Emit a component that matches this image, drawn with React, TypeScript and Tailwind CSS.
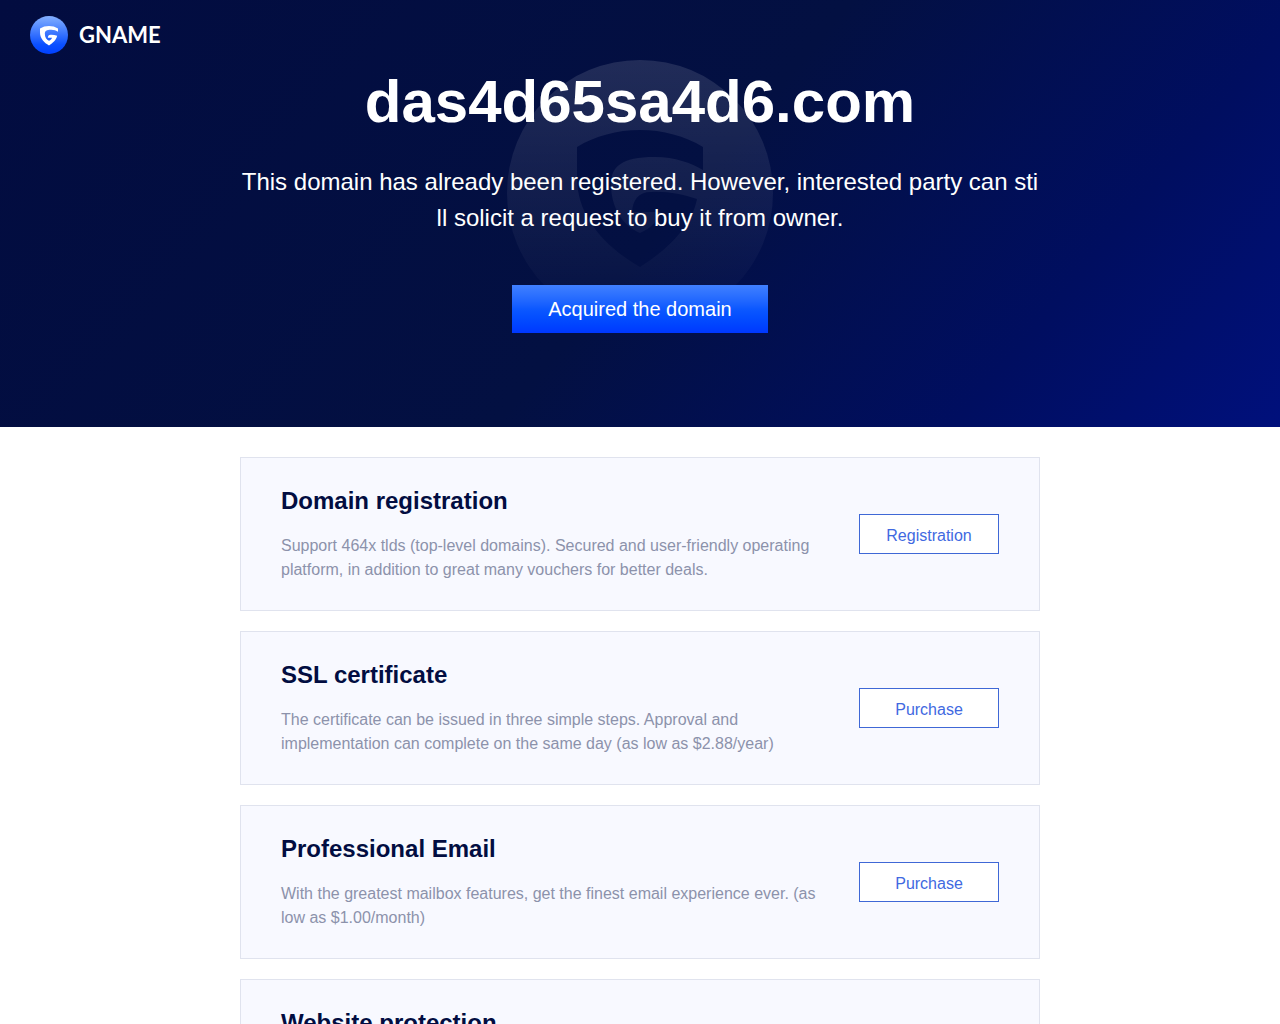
const services = [
    {
        title: 'Domain registration',
        text: 'Support 464x tlds (top-level domains). Secured and user-friendly operating platform, in addition to great many vouchers for better deals.',
        action: 'Registration',
    },
    {
        title: 'SSL certificate',
        text: 'The certificate can be issued in three simple steps. Approval and implementation can complete on the same day (as low as $2.88/year)',
        action: 'Purchase',
    },
    {
        title: 'Professional Email',
        text: 'With the greatest mailbox features, get the finest email experience ever. (as low as $1.00/month)',
        action: 'Purchase',
    },
    {
        title: 'Website protection',
        text: 'Protect your website with fast and reliable security services.',
        action: 'Purchase',
    },
];

const SHIELD =
    'M70 87C88 76 110 70 133 70S178 76 196 87V110C184 103 168 97 148 97C114 97 104 107 104 124C104 148 116 166 133 173C144 168 151 161 154 152H125C126 140 131 132 144 132C160 131 175 134 190 139C185 166 160 190 133 207C100 188 70 158 70 118Z';

const Logo = () => (
    <a href="#" className="flex w-fit items-center gap-[11px] text-white">
        <svg viewBox="0 0 266 266" className="size-[38px]" aria-hidden="true">
            <defs>
                <linearGradient id="logo-fill" x1="0" y1="0" x2="0" y2="1">
                    <stop offset="0" stopColor="#84b0ff" />
                    <stop offset="0.75" stopColor="#0b50ff" />
                    <stop offset="1" stopColor="#0040ff" />
                </linearGradient>
            </defs>
            <circle cx="133" cy="133" r="133" fill="url(#logo-fill)" />
            <path d={SHIELD} fill="#fff" />
        </svg>
        <span className="font-['Lato',sans-serif] text-[22px] leading-6 font-bold">GNAME</span>
    </a>
);

const Watermark = () => (
    <svg viewBox="0 0 266 266" className="absolute top-[60px] left-1/2 w-[266px] -translate-x-1/2" aria-hidden="true">
        <defs>
            <linearGradient id="mark-fill" x1="0" y1="0" x2="0" y2="1">
                <stop offset="0" stopColor="#fff" stopOpacity="0.12" />
                <stop offset="1" stopColor="#fff" stopOpacity="0" />
            </linearGradient>
        </defs>
        <path d={`M133 0a133 133 0 1 0 0 266a133 133 0 1 0 0-266Z${SHIELD}`} fill="url(#mark-fill)" fillRule="evenodd" />
    </svg>
);

const ServiceCard = ({ title, text, action }: { title: string; text: string; action: string }) => (
    <section className="flex items-center justify-between gap-10 border border-[#e0e3ee] bg-[#f8f9ff] px-10 py-6">
        <div className="max-w-[538px]">
            <h2 className="text-2xl leading-[38px] font-bold text-[#020d41]">{title}</h2>
            <p className="mt-3.5 mb-1 text-base leading-6 text-[#8c92ab]">{text}</p>
        </div>
        <button type="button" className="h-10 w-[140px] shrink-0 border border-[#3f68d6] bg-white pt-1 text-base text-[#4169e1]">
            {action}
        </button>
    </section>
);

export default function App() {
    return (
        <div className="min-h-screen bg-white font-['Liberation_Sans',Arial,sans-serif]">
            <header className="relative bg-linear-[130deg,#020c40_0%,#031042_52%,#000e60_80%,#00107c_100%] pb-[94px]">
                <Watermark />
                <div className="relative px-[30px] pt-4">
                    <Logo />
                </div>
                <div className="relative mx-auto flex max-w-[800px] flex-col items-center text-center text-white">
                    <h1 className="mt-3 text-[60px] leading-[72px] font-bold">das4d65sa4d6.com</h1>
                    <p className="mt-[26px] text-2xl leading-9 break-all">
                        This domain has already been registered. However, interested party can still solicit a request to buy it from owner.
                    </p>
                    <button type="button" className="mt-[49px] h-12 w-64 bg-linear-to-b from-[#4080ff] via-[#0c58ff] to-[#0037ff] text-xl">
                        Acquired the domain
                    </button>
                </div>
            </header>
            <main className="mx-auto flex max-w-[800px] flex-col gap-5 py-[30px]">
                {services.map((service) => (
                    <ServiceCard key={service.title} {...service} />
                ))}
            </main>
        </div>
    );
}
